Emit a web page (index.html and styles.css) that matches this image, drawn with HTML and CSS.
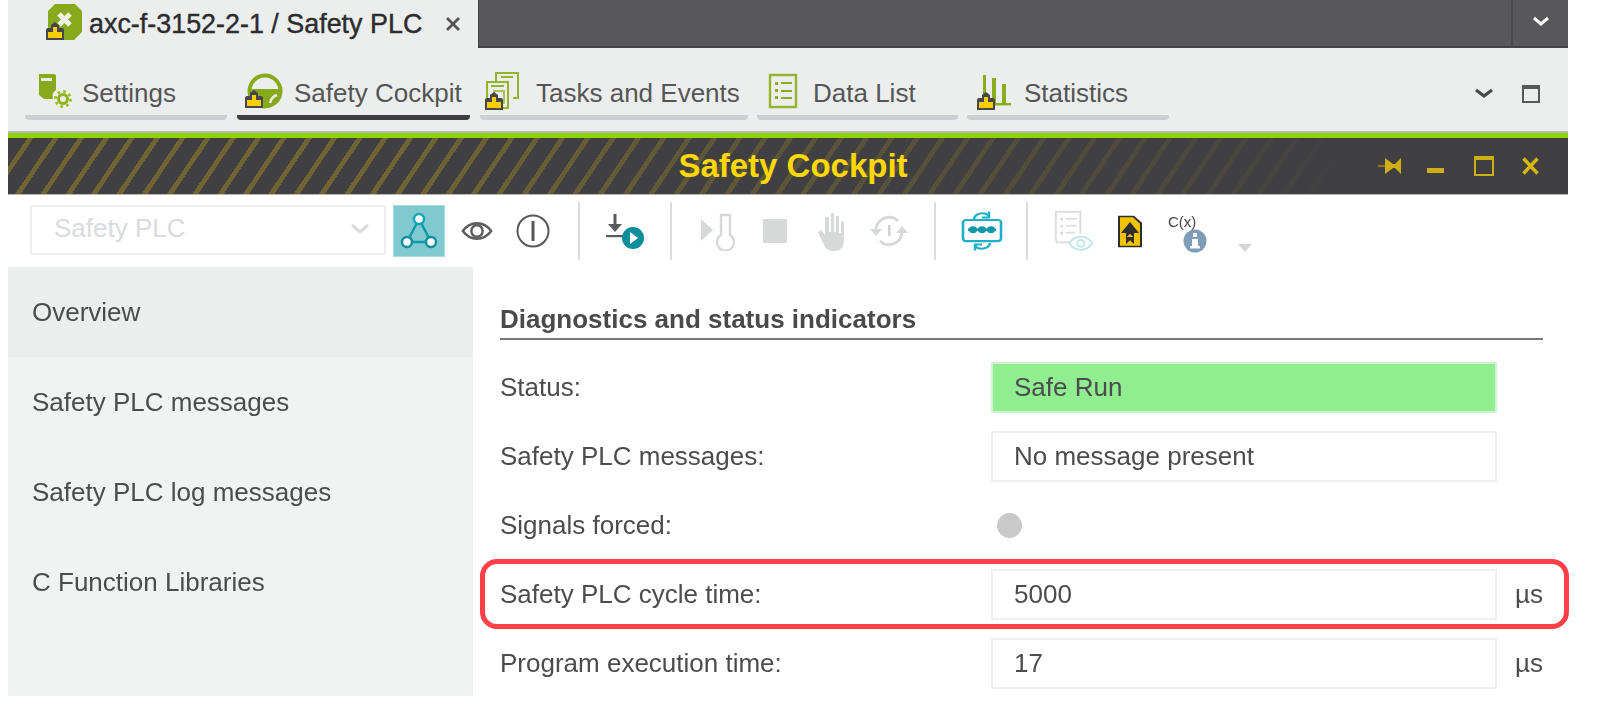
FILE: index.html
```html
<!DOCTYPE html>
<html lang="en">
<head>
<meta charset="utf-8">
<title>Safety Cockpit</title>
<link rel="stylesheet" href="styles.css">
</head>
<body>
<div class="app">
  <div class="doc-tabs">
    <div class="doc-tab">
      <span class="ico-device">
        <svg width="36" height="36" viewBox="0 0 36 36"><path class="g-fill" d="M9 0h20l7 7v21l-8 8H9l-7-7V7z"/><path d="M13 10l11 11M24 10L13 21" stroke="#eef1e6" stroke-width="5" fill="none"/><use href="#lock" x="0" y="18"/></svg>
      </span>
      <span class="doc-title">axc-f-3152-2-1 / Safety PLC</span>
      <svg class="doc-close" width="16" height="16" viewBox="0 0 16 16"><path d="M2 2l12 12M14 2L2 14" stroke="#555" stroke-width="2.800" fill="none"/></svg>
    </div>
    <div class="doc-rest">
      <div class="doc-more"><svg width="18" height="12" viewBox="0 0 18 12"><path d="M2 3l7 6 7-6" stroke="#fff" stroke-width="3" fill="none"/></svg></div>
    </div>
  </div>

  <div class="view-tabs">
    <div class="view-tab t-settings">
      <svg class="vt-ico" width="36" height="36" viewBox="0 0 36 36"><path class="g-fill" d="M2 1h15a2 2 0 0 1 2 2v14a8 8 0 0 0-3 9H7l-5-4z"/><rect x="4" y="5" width="11" height="3" fill="#eceeed"/><circle cx="26" cy="26" r="4.500" fill="none" stroke="#8fb31c" stroke-width="3"/><circle cx="26" cy="26" r="7.500" fill="none" stroke="#97c11c" stroke-width="2.800" stroke-dasharray="2.600 3.300"/></svg>
      <span>Settings</span>
    </div>
    <div class="view-tab active t-cockpit">
      <svg class="vt-ico" width="40" height="40" viewBox="0 0 40 40"><circle cx="20" cy="20" r="15.500" fill="none" stroke="#87a91c" stroke-width="4"/><path class="g-fill" d="M4 18h32a16 16 0 0 1-32 2z"/><path d="M25 32c1-4 4-7 7-8" stroke="#eceeed" stroke-width="2.400" fill="none"/><use href="#lock" x="0" y="19"/></svg>
      <span>Safety Cockpit</span>
    </div>
    <div class="view-tab t-tasks">
      <svg class="vt-ico" width="40" height="40" viewBox="0 0 40 40"><path d="M11 10V2h22v25h-5" fill="none" stroke="#93b52b" stroke-width="2"/><rect x="16" y="5" width="12" height="2" fill="#93b52b"/><rect x="2" y="11" width="21" height="26" fill="#eceeed" stroke="#93b52b" stroke-width="2"/><rect x="6" y="14" width="13" height="2" fill="#93b52b"/><rect x="9" y="20" width="10" height="12" fill="none" stroke="#93b52b" stroke-width="1.500"/><use href="#lock" x="0" y="21"/></svg>
      <span>Tasks and Events</span>
    </div>
    <div class="view-tab t-data">
      <svg class="vt-ico" width="32" height="36" viewBox="0 0 32 36"><rect x="3" y="2" width="26" height="32" fill="none" stroke="#93b52b" stroke-width="2.400"/><g fill="#8aac1e"><rect x="8" y="9" width="3" height="3"/><rect x="14" y="9" width="11" height="2"/><rect x="8" y="16" width="3" height="3"/><rect x="14" y="17" width="11" height="2"/><rect x="8" y="23" width="3" height="3"/><rect x="14" y="24" width="11" height="2"/></g></svg>
      <span>Data List</span>
    </div>
    <div class="view-tab t-stats">
      <svg class="vt-ico" width="36" height="40" viewBox="0 0 36 40"><g fill="#8aac1e"><rect x="6" y="4" width="3" height="28"/><rect x="15" y="7" width="4" height="25"/><rect x="25" y="13" width="4" height="19"/><rect x="8" y="32" width="26" height="2.400"/></g><use href="#lock" x="0" y="21"/></svg>
      <span>Statistics</span>
    </div>
    <div class="view-ctrl">
      <svg width="20" height="12" viewBox="0 0 20 12"><path d="M2 2l8 6 8-6" stroke="#48484a" stroke-width="3.200" fill="none"/></svg>
      <svg width="20" height="20" viewBox="0 0 20 20"><rect x="2" y="2" width="16" height="16" fill="none" stroke="#58585a" stroke-width="2"/><rect x="2" y="2" width="16" height="3" fill="#58585a"/></svg>
    </div>
  </div>

  <div class="header">
    <div class="hdr-title">Safety Cockpit</div>
    <div class="hdr-ctrl">
      <svg class="c-pin" width="24" height="20" viewBox="0 0 24 20"><path d="M0 10h8" stroke="#8a7a1c" stroke-width="2"/><path d="M7 2l8 6h2l6-6v16l-6-6h-2l-8 6z" fill="#cfae13"/></svg>
      <svg class="c-min" width="17" height="20" viewBox="0 0 17 20"><rect x="0" y="12" width="17" height="5" fill="#cfae13"/></svg>
      <svg class="c-max" width="20" height="20" viewBox="0 0 20 20"><rect x="1" y="1" width="18" height="18" fill="none" stroke="#cfae13" stroke-width="2"/><rect x="1" y="1" width="18" height="3" fill="#cfae13"/></svg>
      <svg class="c-close" width="17" height="18" viewBox="0 0 17 18"><path d="M1.500 1.500l14 15M15.500 1.500l-14 15" stroke="#d8b612" stroke-width="3.400" fill="none"/></svg>
    </div>
  </div>

  <div class="toolbar">
    <div class="combo">
      <span>Safety PLC</span>
      <svg width="18" height="12" viewBox="0 0 18 12"><path d="M1 2l8 7 8-7" stroke="#d9dbdc" stroke-width="3" fill="none"/></svg>
    </div>
    <div class="tb-btn">
      <svg width="40" height="40" viewBox="0 0 40 40"><path d="M20 8L8 31h24z" fill="none" stroke="#0b9aa8" stroke-width="2.400"/><circle cx="20" cy="8" r="5" fill="#fff" stroke="#0fa7b8" stroke-width="2.400"/><circle cx="8" cy="31" r="5" fill="#fff" stroke="#0b8e9f" stroke-width="2.400"/><circle cx="32" cy="31" r="5" fill="#fff" stroke="#0b8e9f" stroke-width="2.400"/></svg>
    </div>
    <svg class="tb-i i-eye" width="34" height="24" viewBox="0 0 36 24"><path d="M3 12c8-11 22-11 30 0-8 11-22 11-30 0z" fill="none" stroke="#5d5d5f" stroke-width="2.600"/><circle cx="18" cy="12" r="6" fill="none" stroke="#5d5d5f" stroke-width="2.600"/></svg>
    <svg class="tb-i i-power" width="36" height="36" viewBox="0 0 36 36"><circle cx="18" cy="18" r="15.500" fill="none" stroke="#58585a" stroke-width="2"/><rect x="16.500" y="8" width="3" height="20" fill="#58585a"/></svg>
    <span class="sep s1"></span>
    <svg class="tb-i i-dl" width="44" height="40" viewBox="0 0 44 40"><path d="M13 3v15" stroke="#5a5a5c" stroke-width="3"/><path d="M6 13h14l-7 8z" fill="#5a5a5c"/><rect x="4" y="24" width="18" height="2.200" fill="#5a5a5c"/><circle cx="31" cy="27" r="11" fill="#0b8d9c"/><path d="M28 21l8 6-8 6z" fill="#fff"/></svg>
    <span class="sep s2"></span>
    <svg class="tb-i i-temp" width="42" height="40" viewBox="0 0 42 40"><path d="M2 8l12 11-12 11z" fill="#d7d8d8"/><path d="M22 4h9v20a8.500 8.500 0 1 1-9 0z" fill="none" stroke="#d7d8d8" stroke-width="2.400"/></svg>
    <span class="stop"></span>
    <svg class="tb-i i-hand" width="30" height="42" viewBox="0 0 30 42"><path d="M8 12v13l-4-5-3 2 6 13c2 4 5 6 10 6 7 0 10-4 10-12V11h-3v12h-2V6h-3v16h-2V3h-3v19h-2V7H8z" fill="#d7d8d8"/></svg>
    <svg class="tb-i i-cycle" width="38" height="38" viewBox="0 0 38 38"><path d="M6 18a13 13 0 0 1 22-9" fill="none" stroke="#d7d8d8" stroke-width="3"/><path d="M32 20a13 13 0 0 1-22 9" fill="none" stroke="#d7d8d8" stroke-width="3"/><path d="M0 17h12l-6 7zM26 21h12l-6-7z" fill="#d7d8d8"/><rect x="18" y="13" width="2.500" height="11" fill="#cfd0d0"/></svg>
    <span class="sep s3"></span>
    <svg class="tb-i i-net" width="42" height="44" viewBox="0 0 42 52" preserveAspectRatio="none"><rect x="2" y="13" width="38" height="25" rx="3" fill="none" stroke="#1bb0c4" stroke-width="2.600"/><g fill="#0d97a8"><rect x="7" y="23" width="28" height="3"/><circle cx="12" cy="24.500" r="4"/><circle cx="21" cy="24.500" r="4"/><circle cx="30" cy="24.500" r="4"/></g><path d="M13 12c1-8 12-9 15-3M28 3v7h-7" fill="none" stroke="#1bb0c4" stroke-width="2.400"/><path d="M29 40c-1 8-12 9-15 3M14 49v-7h7" fill="none" stroke="#1bb0c4" stroke-width="2.400"/></svg>
    <span class="sep s4"></span>
    <svg class="tb-i i-list" width="40" height="42" viewBox="0 0 44 48" preserveAspectRatio="none"><path d="M2 36V2h27v25" fill="none" stroke="#dcdddd" stroke-width="2.200"/><path d="M2 37h16" stroke="#dcdddd" stroke-width="2.200"/><g fill="#dcdddd"><rect x="7" y="9" width="3" height="3"/><rect x="13" y="9" width="12" height="2"/><rect x="7" y="17" width="3" height="3"/><rect x="13" y="17" width="12" height="2"/><rect x="7" y="25" width="3" height="3"/><rect x="13" y="25" width="10" height="2"/></g><path d="M17 38c6-10 19-10 25 0-6 10-19 10-25 0z" fill="#fff" stroke="#bfe4ea" stroke-width="2"/><circle cx="29.500" cy="38" r="4" fill="none" stroke="#bfe4ea" stroke-width="2"/></svg>
    <svg class="tb-i i-doc" width="26" height="33" viewBox="0 0 26 42" preserveAspectRatio="none"><path d="M1 1h16l8 9v31H1z" fill="#2e2e2e"/><path d="M3 3h13l7 8v28H3z" fill="#f3c200"/><path d="M13 9l9 14h-5v6l-4-5-4 5v-6H4z" fill="#2e2e2e"/><path d="M9 28h8v9l-4-5-4 5z" fill="#2e2e2e"/></svg>
    <div class="i-cinfo">
      <span class="c-label">C(x)</span>
      <svg width="24" height="24" viewBox="0 0 24 24"><circle cx="12" cy="12" r="11.500" fill="#7e9db9"/><rect x="10" y="4" width="4" height="4" fill="#fff"/><rect x="9" y="10" width="6" height="7" fill="#fff"/><rect x="7" y="17" width="10" height="2.500" fill="#fff"/></svg>
    </div>
    <svg class="tb-i i-arrow" width="14" height="8" viewBox="0 0 14 8"><path d="M0 0h14l-7 8z" fill="#d4d5d5"/></svg>
  </div>

  <div class="body">
    <nav class="side">
      <div class="side-item on">Overview</div>
      <div class="side-item">Safety PLC messages</div>
      <div class="side-item">Safety PLC log messages</div>
      <div class="side-item">C Function Libraries</div>
    </nav>
    <main class="main">
      <h2 class="section">Diagnostics and status indicators</h2>
      <div class="row"><label>Status:</label><div class="field ok">Safe Run</div><span class="unit"></span></div>
      <div class="row"><label>Safety PLC messages:</label><div class="field">No message present</div><span class="unit"></span></div>
      <div class="row"><label>Signals forced:</label><div class="led-wrap"><span class="led"></span></div><span class="unit"></span></div>
      <div class="row highlight"><label>Safety PLC cycle time:</label><div class="field">5000</div><span class="unit">µs</span></div>
      <div class="row"><label>Program execution time:</label><div class="field">17</div><span class="unit">µs</span></div>
    </main>
  </div>
</div>

<svg class="defs" width="0" height="0">
  <defs>
    <g id="lock">
      <path d="M5 6V3l4-3 4 3v3h3a2 2 0 0 1 2 2v10H0V8a2 2 0 0 1 2-2z" fill="#47474a"/>
      <rect x="2" y="10" width="14" height="6" fill="#f7cf00"/>
      <rect x="7" y="5" width="4" height="5" fill="#f7cf00"/>
    </g>
  </defs>
</svg>
</body>
</html>
```
FILE: styles.css
```css
* { box-sizing: border-box; }
html, body { margin: 0; height: 100%; background: #fff; overflow: hidden; }
body { font-family: "Liberation Sans", Arial, sans-serif; color: #4a4a4c; }
.defs { position: absolute; }
.g-fill { fill: #87a91c; }

.app { margin-left: 8px; width: 1560px; height: 696px; display: flex; flex-direction: column; filter: blur(.7px); }

.doc-tabs { display: flex; height: 48px; flex: none; }
.doc-tab { width: 470px; background: #eceeed; display: flex; align-items: center; padding-left: 38px; }
.ico-device { display: block; width: 36px; height: 36px; margin-top: -4px; }
.ico-device svg { display: block; overflow: visible; }
.doc-title { margin-left: 7px; font-size: 26.900px; color: #2c2c2e; -webkit-text-stroke: .4px #2c2c2e; white-space: nowrap; }
.doc-close { margin-left: 23px; }
.doc-rest { flex: 1; background: #58585a; border-left: 1px solid #444; border-bottom: 2px solid #444; display: flex; justify-content: flex-end; }
.doc-more { width: 57px; border-left: 2px solid #4a4a4c; display: flex; align-items: center; justify-content: center; padding-bottom: 4px; }

.view-tabs { height: 85px; flex: none; background: #eceeed; border-bottom: 2px solid #b5b6b6; display: flex; }
.view-tab { position: relative; display: flex; align-items: center; font-size: 26px; color: #555557; height: 72px; padding-top: 14px; white-space: nowrap; }
.view-tab span { margin-top: 4px; }
.view-tab::after { content: ""; position: absolute; left: 0; right: 0; bottom: 0; height: 5px; background: #ccd0d4; border-radius: 0 0 4px 4px; }
.view-tab.active::after { background: #3e3e40; }
.vt-ico { flex: none; overflow: visible; }
.t-settings { margin-left: 17px; width: 202px; padding-left: 12px; }
.t-settings span { margin-left: 9px; }
.t-cockpit { margin-left: 10px; width: 233px; padding-left: 8px; }
.t-cockpit span { margin-left: 9px; }
.t-tasks { margin-left: 10px; width: 268px; padding-left: 5px; }
.t-tasks span { margin-left: 11px; }
.t-data { margin-left: 9px; width: 201px; padding-left: 10px; }
.t-data span { margin-left: 14px; }
.t-stats { margin-left: 9px; width: 202px; padding-left: 10px; }
.t-stats span { margin-left: 11px; }
.view-ctrl { margin-left: auto; margin-right: 27px; display: flex; align-items: center; gap: 27px; padding-top: 8px; }

.header { height: 62px; flex: none; border-top: 5px solid #8fd400; border-bottom: 1px solid #b8b8b8;
  background:
    linear-gradient(90deg, rgba(64,64,66,0) 0, rgba(64,64,66,0) 25%, rgba(64,64,66,.35) 45%, rgba(64,64,66,.75) 75%, #404042 86%),
    repeating-linear-gradient(124deg, #404042 0 16.200px, #6f6432 16.200px 21px);
  display: flex; align-items: center; justify-content: center; padding-left: 10px; position: relative; }
.hdr-title { font-size: 33px; font-weight: 700; color: #ffd800; }
.hdr-ctrl { position: absolute; right: 29px; top: 0; bottom: 0; display: flex; align-items: center; }
.c-min { margin-left: 25px; }
.c-max { margin-left: 30px; }
.c-close { margin-left: 28px; }

.toolbar { height: 72px; flex: none; background: #fff; display: flex; align-items: center; }
.combo { width: 356px; height: 50px; margin-left: 22px; margin-bottom: 2px; border: 2px solid #eef0f0; background: #fff; display: flex; align-items: center; justify-content: space-between; padding: 0 15px 3px 22px; font-size: 26px; color: #d9dbdc; flex: none; }
.tb-btn { width: 52px; height: 52px; margin-left: 7px; background: #7fc9cf; border: 1px solid #a9dbdf; display: flex; align-items: center; justify-content: center; flex: none; }
.tb-i { flex: none; display: block; }
.i-eye { margin-left: 15px; }
.i-power { margin-left: 21px; }
.sep { width: 2px; height: 58px; background: #dcdcdc; flex: none; }
.s1 { margin-left: 27px; }
.i-dl { margin-left: 22px; }
.s2 { margin-left: 24px; }
.i-temp { margin-left: 27px; }
.stop { width: 24px; height: 24px; background: #d7d8d8; margin-left: 22px; flex: none; }
.i-hand { margin-left: 30px; }
.i-cycle { margin-left: 23px; }
.s3 { margin-left: 26px; }
.i-net { margin-left: 25px; }
.s4 { margin-left: 23px; }
.i-list { margin-left: 26px; }
.i-doc { margin-left: 23px; }
.i-cinfo { position: relative; width: 40px; height: 50px; margin-left: 25px; align-self: flex-start; margin-top: 14px; flex: none; }
.c-label { position: absolute; left: 0; top: 4px; font-size: 15px; color: #444; }
.i-cinfo svg { position: absolute; left: 15px; top: 20px; }
.i-arrow { margin-left: 30px; margin-top: 34px; }

.body { flex: 1; display: flex; min-height: 0; }
.side { width: 465px; flex: none; background: #f1f2f2; }
.side-item { height: 90px; display: flex; align-items: center; padding-left: 24px; font-size: 26px; color: #4c4c4e; }
.side-item.on { background: #eceeed; }

.main { flex: 1; padding: 0 25px 0 27px; }
.section { margin: 0; height: 73px; padding-top: 37px; border-bottom: 2px solid #77777a; font-size: 26px; line-height: 30px; font-weight: 700; color: #4a4a4c; }
.row { display: grid; grid-template-columns: 491px 506px 1fr; align-items: center; height: 69px; font-size: 26px; color: #4c4c4e; position: relative; }
.section + .row { margin-top: 13px; }
.row label { display: block; }
.field { height: 51px; border: 2px solid #f0f0f2; display: flex; align-items: center; padding-left: 21px; background: #fff; }
.field.ok { background: #90ee90; border-color: #d2f0d2; }
.led-wrap { padding-left: 6px; display: flex; }
.led { width: 25px; height: 25px; border-radius: 50%; background: #c9c9c9; }
.unit { padding-left: 18px; }
.highlight::before { content: ""; position: absolute; left: -20px; right: -26px; top: -1px; bottom: 0; border: 5px solid #ff4048; border-radius: 17px; pointer-events: none; }
```
